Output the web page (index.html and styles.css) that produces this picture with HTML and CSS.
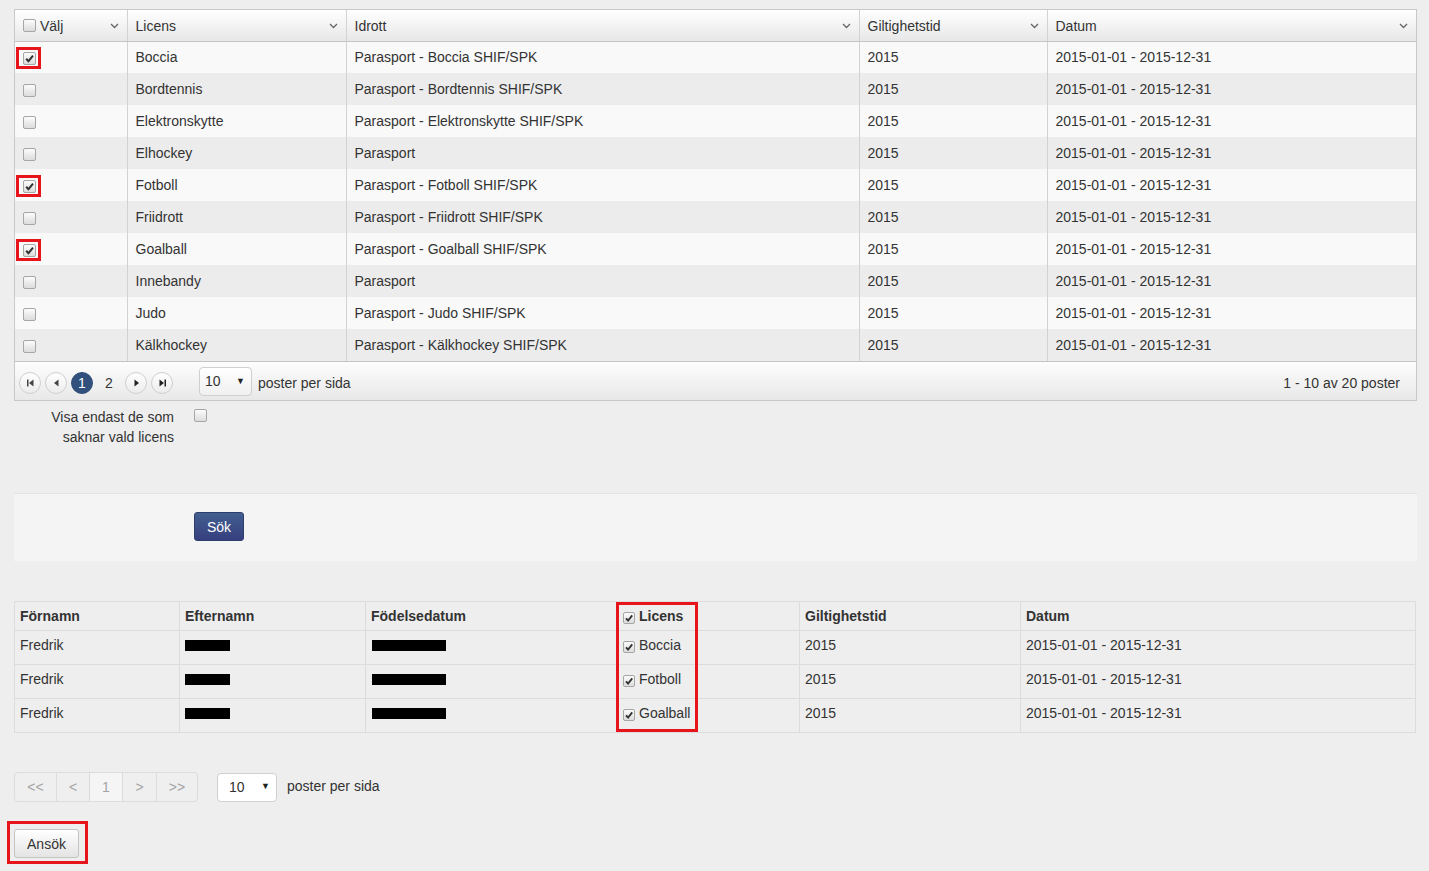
FILE: index.html
```html
<!DOCTYPE html>
<html lang="sv">
<head>
<meta charset="utf-8">
<title>Licenser</title>
<link rel="stylesheet" href="styles.css">
</head>
<body>
<div class="page">

  <div class="grid">
    <table class="grid-table">
      <colgroup>
        <col style="width:112px"><col style="width:219px"><col style="width:513px"><col style="width:188px"><col>
      </colgroup>
      <thead>
        <tr>
          <th><div class="hcell"><span class="hlabel"><span class="cb"></span>Välj</span><svg class="chev" width="9" height="6" viewBox="0 0 9 6"><path d="M1 1l3.5 3.5L8 1" fill="none" stroke="#666" stroke-width="1.3"/></svg></div></th>
          <th><div class="hcell"><span>Licens</span><svg class="chev" width="9" height="6" viewBox="0 0 9 6"><path d="M1 1l3.5 3.5L8 1" fill="none" stroke="#666" stroke-width="1.3"/></svg></div></th>
          <th><div class="hcell"><span>Idrott</span><svg class="chev" width="9" height="6" viewBox="0 0 9 6"><path d="M1 1l3.5 3.5L8 1" fill="none" stroke="#666" stroke-width="1.3"/></svg></div></th>
          <th><div class="hcell"><span>Giltighetstid</span><svg class="chev" width="9" height="6" viewBox="0 0 9 6"><path d="M1 1l3.5 3.5L8 1" fill="none" stroke="#666" stroke-width="1.3"/></svg></div></th>
          <th><div class="hcell"><span>Datum</span><svg class="chev" width="9" height="6" viewBox="0 0 9 6"><path d="M1 1l3.5 3.5L8 1" fill="none" stroke="#666" stroke-width="1.3"/></svg></div></th>
        </tr>
      </thead>
      <tbody>
        <tr><td><span class="cb checked marked"><svg viewBox="0 0 13 13"><path d="M3.2 6.8l2.3 2.4 4.5-5.6" fill="none" stroke="#333" stroke-width="2"/></svg></span></td><td>Boccia</td><td>Parasport - Boccia SHIF/SPK</td><td>2015</td><td>2015-01-01 - 2015-12-31</td></tr>
        <tr><td><span class="cb"></span></td><td>Bordtennis</td><td>Parasport - Bordtennis SHIF/SPK</td><td>2015</td><td>2015-01-01 - 2015-12-31</td></tr>
        <tr><td><span class="cb"></span></td><td>Elektronskytte</td><td>Parasport - Elektronskytte SHIF/SPK</td><td>2015</td><td>2015-01-01 - 2015-12-31</td></tr>
        <tr><td><span class="cb"></span></td><td>Elhockey</td><td>Parasport</td><td>2015</td><td>2015-01-01 - 2015-12-31</td></tr>
        <tr><td><span class="cb checked marked"><svg viewBox="0 0 13 13"><path d="M3.2 6.8l2.3 2.4 4.5-5.6" fill="none" stroke="#333" stroke-width="2"/></svg></span></td><td>Fotboll</td><td>Parasport - Fotboll SHIF/SPK</td><td>2015</td><td>2015-01-01 - 2015-12-31</td></tr>
        <tr><td><span class="cb"></span></td><td>Friidrott</td><td>Parasport - Friidrott SHIF/SPK</td><td>2015</td><td>2015-01-01 - 2015-12-31</td></tr>
        <tr><td><span class="cb checked marked"><svg viewBox="0 0 13 13"><path d="M3.2 6.8l2.3 2.4 4.5-5.6" fill="none" stroke="#333" stroke-width="2"/></svg></span></td><td>Goalball</td><td>Parasport - Goalball SHIF/SPK</td><td>2015</td><td>2015-01-01 - 2015-12-31</td></tr>
        <tr><td><span class="cb"></span></td><td>Innebandy</td><td>Parasport</td><td>2015</td><td>2015-01-01 - 2015-12-31</td></tr>
        <tr><td><span class="cb"></span></td><td>Judo</td><td>Parasport - Judo SHIF/SPK</td><td>2015</td><td>2015-01-01 - 2015-12-31</td></tr>
        <tr><td><span class="cb"></span></td><td>Kälkhockey</td><td>Parasport - Kälkhockey SHIF/SPK</td><td>2015</td><td>2015-01-01 - 2015-12-31</td></tr>
      </tbody>
    </table>
    <div class="pager">
      <div class="pager-nav">
        <span class="pbtn"><svg width="9" height="8" viewBox="0 0 9 8"><rect x="1" y="0.5" width="1.5" height="7" fill="#444"/><path d="M7.5 0.5v7L3 4z" fill="#444"/></svg></span>
        <span class="pbtn"><svg width="9" height="8" viewBox="0 0 9 8"><path d="M6.5 0.5v7L2 4z" fill="#444"/></svg></span>
        <span class="pbtn active">1</span>
        <span class="pbtn plain">2</span>
        <span class="pbtn"><svg width="9" height="8" viewBox="0 0 9 8"><path d="M2.5 0.5v7L7 4z" fill="#222"/></svg></span>
        <span class="pbtn"><svg width="9" height="8" viewBox="0 0 9 8"><path d="M1.5 0.5v7L6 4z" fill="#222"/><rect x="6.5" y="0.5" width="1.5" height="7" fill="#222"/></svg></span>
      </div>
      <div class="psize"><span>10</span><span class="arrow">▼</span></div>
      <span class="plabel">poster per sida</span>
      <span class="pinfo">1 - 10 av 20 poster</span>
    </div>
  </div>

  <div class="filter">
    <div class="filter-label">Visa endast de som<br>saknar vald licens</div>
    <span class="cb filter-cb"></span>
  </div>

  <div class="search-panel">
    <button class="btn-primary">Sök</button>
  </div>

  <div class="results">
    <table class="res-table">
      <colgroup>
        <col style="width:165px"><col style="width:186px"><col style="width:251px"><col style="width:183px"><col style="width:221px"><col>
      </colgroup>
      <thead>
        <tr><th>Förnamn</th><th>Efternamn</th><th>Födelsedatum</th><th><span class="cb checked small"><svg viewBox="0 0 13 13"><path d="M3.2 6.8l2.3 2.4 4.5-5.6" fill="none" stroke="#333" stroke-width="2"/></svg></span>Licens</th><th>Giltighetstid</th><th>Datum</th></tr>
      </thead>
      <tbody>
        <tr><td>Fredrik</td><td><span class="redact short"></span></td><td><span class="redact long"></span></td><td><span class="cb checked small"><svg viewBox="0 0 13 13"><path d="M3.2 6.8l2.3 2.4 4.5-5.6" fill="none" stroke="#333" stroke-width="2"/></svg></span>Boccia</td><td>2015</td><td>2015-01-01 - 2015-12-31</td></tr>
        <tr><td>Fredrik</td><td><span class="redact short"></span></td><td><span class="redact long"></span></td><td><span class="cb checked small"><svg viewBox="0 0 13 13"><path d="M3.2 6.8l2.3 2.4 4.5-5.6" fill="none" stroke="#333" stroke-width="2"/></svg></span>Fotboll</td><td>2015</td><td>2015-01-01 - 2015-12-31</td></tr>
        <tr><td>Fredrik</td><td><span class="redact short"></span></td><td><span class="redact long"></span></td><td><span class="cb checked small"><svg viewBox="0 0 13 13"><path d="M3.2 6.8l2.3 2.4 4.5-5.6" fill="none" stroke="#333" stroke-width="2"/></svg></span>Goalball</td><td>2015</td><td>2015-01-01 - 2015-12-31</td></tr>
      </tbody>
    </table>
    <div class="res-mark"></div>
  </div>

  <div class="bottom-pager">
    <div class="pgroup">
      <span class="pcell w41">&lt;&lt;</span>
      <span class="pcell w33">&lt;</span>
      <span class="pcell w33 cur">1</span>
      <span class="pcell w34">&gt;</span>
      <span class="pcell w41">&gt;&gt;</span>
    </div>
    <div class="bsize"><span>10</span><span class="arrow">▼</span></div>
    <span class="plabel">poster per sida</span>
  </div>

  <div class="apply">
    <span class="mark-wrap"><button class="btn-default">Ansök</button></span>
  </div>

</div>
</body>
</html>
```

FILE: styles.css
```css
*, *::before, *::after { box-sizing: border-box; }
html, body { margin: 0; padding: 0; }
body {
  background: #eeeeee;
  font-family: "Liberation Sans", Arial, sans-serif;
  font-size: 14px;
  color: #333;
}
.page {
  padding: 9px 12px 13px 14px;
  min-height: 871px;
}

/* checkbox */
.cb {
  display: inline-block;
  width: 13px;
  height: 13px;
  border: 1px solid #a6a6a6;
  border-radius: 2px;
  background: linear-gradient(#fcfcfc, #dcdcdc);
  vertical-align: middle;
  position: relative;
}
.cb svg {
  position: absolute;
  left: -1px;
  top: -1px;
  width: 13px;
  height: 13px;
}
.marked::after {
  content: "";
  position: absolute;
  left: -8px;
  top: -6px;
  width: 25px;
  height: 22px;
  border: 3px solid #e8141c;
}

/* top grid */
.grid {
  width: 1403px;
  border: 1px solid #c8c8c8;
  background: #f9f9f9;
}
.grid-table {
  width: 100%;
  border-collapse: collapse;
  table-layout: fixed;
}
.grid-table th {
  height: 31px;
  padding: 1px 8px 0 8px;
  font-weight: normal;
  text-align: left;
  background: linear-gradient(#ffffff, #e7e7e7);
  border-bottom: 1px solid #c4c4c4;
  border-left: 1px solid #d2d2d2;
}
.grid-table th:first-child { border-left: none; }
.hcell {
  display: flex;
  align-items: center;
  justify-content: space-between;
}
.hlabel { display: flex; align-items: center; gap: 4px; }
.hlabel .cb { margin-top: -1px; }
.chev { margin-right: 0; margin-top: 1px; }
.grid-table td {
  height: 32px;
  padding: 0 8px 0 8px;
  border-left: 1px solid #d2d2d2;
  white-space: nowrap;
}
.grid-table td:first-child { border-left: none; padding-left: 8px; }
.grid-table tbody tr:nth-child(odd) td { background: #f9f9f9; }
.grid-table tbody tr:nth-child(even) td { background: #ececec; }

.pager {
  height: 39px;
  border-top: 1px solid #c4c4c4;
  background: linear-gradient(#fdfdfd, #e8e8e8);
  display: flex;
  align-items: center;
  padding: 3px 16px 0 4px;
}
.pager-nav { display: flex; align-items: center; gap: 4px; }
.pbtn {
  width: 22px;
  height: 22px;
  border-radius: 50%;
  border: 1px solid #cfcfcf;
  background: linear-gradient(#ffffff, #ececec);
  display: flex;
  align-items: center;
  justify-content: center;
  font-size: 14px;
  color: #333;
}
.pbtn.active {
  background: #32507c;
  border-color: #32507c;
  color: #fff;
}
.pbtn.plain {
  border: none;
  background: none;
  margin: 0 1px;
}
.psize {
  margin-left: 26px;
  width: 53px;
  height: 29px;
  border: 1px solid #cfcfcf;
  border-radius: 4px;
  background: linear-gradient(#ffffff, #f0f0f0);
  display: flex;
  align-items: flex-start;
  justify-content: space-between;
  padding: 5px 6px 0 5px;
  font-size: 14px;
  margin-top: -3px;
}
.arrow { font-size: 9px; color: #222; margin-top: 3px; }
.plabel { margin-left: 6px; }
.pinfo { margin-left: auto; }

/* filter */
.filter {
  display: flex;
  align-items: flex-start;
  margin-top: 6px;
}
.filter-label {
  width: 160px;
  text-align: right;
  line-height: 20px;
}
.filter-cb { margin-left: 20px; margin-top: 2px; }

/* search */
.search-panel {
  margin-top: 46px;
  width: 1403px;
  height: 68px;
  background: #f4f4f4;
  border-top: 1px solid #e3e3e3;
  padding: 18px 0 0 180px;
}
.btn-primary {
  width: 50px;
  height: 29px;
  border: 1px solid #2e3f6e;
  border-radius: 3px;
  background: linear-gradient(#425f8f, #363f7e);
  color: #fff;
  font-family: "Liberation Sans", Arial, sans-serif;
  font-size: 14px;
  padding: 0;
}

/* results */
.results {
  position: relative;
  margin-top: 40px;
  width: 1402px;
}
.res-table {
  width: 100%;
  border-collapse: collapse;
  table-layout: fixed;
  border: 1px solid #dcdcdc;
}
.res-table th {
  height: 29px;
  text-align: left;
  padding: 0 5px;
  font-weight: bold;
  border-left: 1px solid #dcdcdc;
  vertical-align: middle;
}
.res-table td {
  height: 34px;
  padding: 6px 5px 0 5px;
  vertical-align: top;
  border-left: 1px solid #dcdcdc;
  border-top: 1px solid #dcdcdc;
  white-space: nowrap;
}
.cb.small {
  width: 12px;
  height: 12px;
  margin-right: 4px;
  margin-left: 1px;
  vertical-align: -3px;
}
.cb.small svg { width: 12px; height: 12px; }
.redact {
  display: inline-block;
  height: 11px;
  background: #000;
  margin-top: 3px;
  vertical-align: top;
}
.redact.short { width: 45px; }
.redact.long { width: 74px; margin-left: 1px; }
.res-mark {
  position: absolute;
  left: 602px;
  top: 1px;
  width: 82px;
  height: 130px;
  border: 3px solid #e8141c;
}

/* bottom pager */
.bottom-pager {
  display: flex;
  align-items: center;
  margin-top: 39px;
}
.pgroup {
  display: flex;
  height: 30px;
  border: 1px solid #dcdcdc;
  border-radius: 4px;
  background: #efefef;
  overflow: hidden;
}
.pcell {
  display: flex;
  align-items: center;
  justify-content: center;
  color: #a4a4a4;
  border-left: 1px solid #dcdcdc;
  font-size: 14px;
}
.pcell:first-child { border-left: none; }
.pcell.cur { background: #f5f5f5; }
.w41 { width: 41px; }
.w33 { width: 33px; }
.w34 { width: 34px; }
.bsize {
  margin-left: 19px;
  width: 60px;
  height: 29px;
  border: 1px solid #d0d0d0;
  border-radius: 4px;
  background: #fff;
  display: flex;
  align-items: center;
  justify-content: space-between;
  padding: 0 6px 0 11px;
}
.bsize .arrow { margin-top: -2px; }
.bottom-pager .plabel { margin-left: 10px; margin-top: -2px; }

/* apply */
.apply { margin-top: 27px; }
.mark-wrap {
  position: relative;
  display: inline-block;
  vertical-align: top;
}
.mark-wrap::after {
  content: "";
  position: absolute;
  left: -7px;
  top: -8px;
  width: 81px;
  height: 43px;
  border: 3px solid #e8141c;
}
.btn-default {
  display: block;
  width: 65px;
  height: 29px;
  border: 1px solid #c4c4c4;
  border-radius: 3px;
  background: linear-gradient(#ffffff, #e4e4e4);
  color: #333;
  font-family: "Liberation Sans", Arial, sans-serif;
  font-size: 14px;
  padding: 0;
}
```
